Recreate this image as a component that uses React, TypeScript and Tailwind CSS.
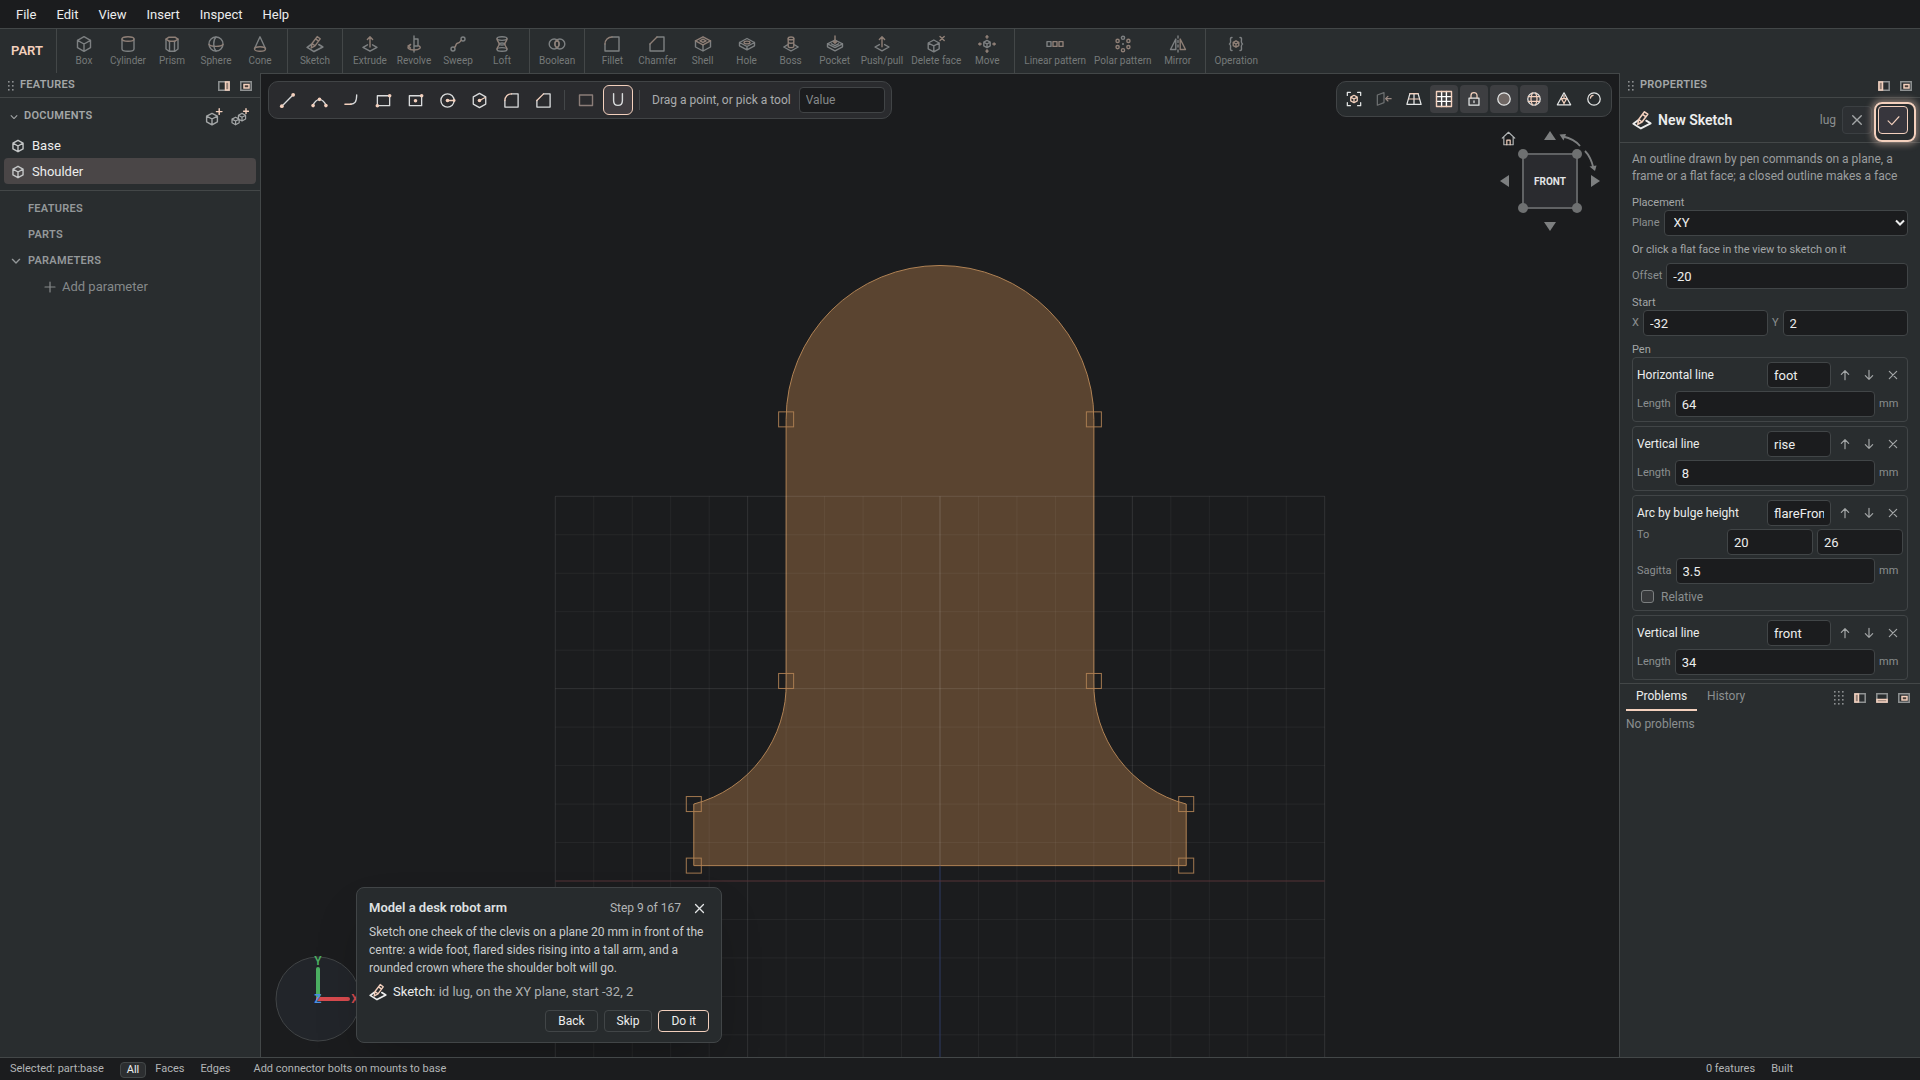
import React, { useState } from "react";
import clsx from "clsx";

const ACCENT = "#f3d0bd";

interface IconProps {
  size?: number;
  className?: string;
}

interface GlyphProps extends IconProps {
  children: React.ReactNode;
}

// every icon is drawn on an 18 unit grid
const Glyph = ({ size = 18, className, children }: GlyphProps) => (
  <svg
    width={size}
    height={size}
    viewBox="0 0 18 18"
    fill="none"
    stroke="currentColor"
    strokeWidth={size < 15 ? 1.8 : 1.4}
    strokeLinejoin="round"
    strokeLinecap="round"
    className={clsx("shrink-0", className)}
    aria-hidden="true"
  >
    {children}
  </svg>
);

const cube = "M9 1.7L15.5 5.3V12.7L9 16.3L2.5 12.7V5.3ZM2.5 5.3L9 9L15.5 5.3M9 9V16.3";

const icons: Record<string, React.ReactNode> = {
  box: <path d={cube} />,
  cylinder: (
    <>
      <path d="M3 4V14C3 15.2 5.7 16.2 9 16.2S15 15.2 15 14V4" />
      <ellipse cx="9" cy="4" rx="6" ry="2.2" stroke={ACCENT} />
    </>
  ),
  prism: (
    <>
      <path d="M3 4.2V14L6 16.2H12L15 14V4.2M6.5 6.2V16M11.5 6.2V16" />
      <path d="M3 4.2L6 2.2H12L15 4.2L12 6.2H6Z" stroke={ACCENT} />
    </>
  ),
  sphere: (
    <>
      <circle cx="9" cy="9" r="7" />
      <path d="M2 9.5C4 12 14 12 16 9.5" stroke={ACCENT} />
      <path d="M9 2C6 5 6 13 9 16" />
    </>
  ),
  cone: (
    <>
      <path d="M3.5 13.8L9 1.8L14.5 13.8" />
      <ellipse cx="9" cy="14" rx="5.5" ry="2.2" stroke={ACCENT} />
    </>
  ),
  sketch: (
    <>
      <path d="M5.5 9.3L1.2 12.4L8 16.6L16.8 12L12.8 9.6" strokeWidth="1.7" />
      <path d="M5.2 13L6 8.5L11.2 1.6L14.2 3.8L9 10.8ZM9.6 3.9L12.6 6.1M6 8.5L9 10.8" stroke={ACCENT} />
    </>
  ),
  extrude: (
    <>
      <path d="M6.5 9.8L2 12.3L9 16.2L16 12.3L11.5 9.8" />
      <path d="M9 12V1.8M6.4 4.4L9 1.8L11.6 4.4" stroke={ACCENT} />
    </>
  ),
  revolve: (
    <>
      <path d="M9 1V17M9 4H13V11H9" />
      <path d="M5 10.5C1 12.5 3.5 15 9 15S17 12.5 13.8 10.8M5.5 13L3 11L5.6 9.4" stroke={ACCENT} />
    </>
  ),
  sweep: (
    <>
      <circle cx="4" cy="14" r="2" />
      <circle cx="14" cy="4" r="2" />
      <path d="M5.5 12.4C8 10 6 8.5 9 8S10.5 6 12.4 5.4" stroke={ACCENT} />
    </>
  ),
  loft: (
    <>
      <ellipse cx="9" cy="3.6" rx="5" ry="1.8" />
      <ellipse cx="9" cy="14.4" rx="5" ry="1.8" />
      <ellipse cx="9" cy="9" rx="2.8" ry="1" />
      <path d="M4 4C4.5 7 6.2 7 6.2 9S4.5 11.5 4 14M14 4C13.5 7 11.8 7 11.8 9S13.5 11.5 14 14" stroke={ACCENT} />
    </>
  ),
  boolean: (
    <>
      <circle cx="6.2" cy="9" r="5" />
      <circle cx="11.8" cy="9" r="5" />
      <path d="M9 4.9C11.8 7.4 11.8 10.6 9 13.1C6.2 10.6 6.2 7.4 9 4.9Z" stroke={ACCENT} />
    </>
  ),
  fillet: (
    <>
      <path d="M9 2H16V16H2V9" />
      <path d="M2 9C2 5 5 2 9 2" stroke={ACCENT} />
    </>
  ),
  chamfer: (
    <>
      <path d="M9 2H16V16H2V9" />
      <path d="M2 9L9 2" stroke={ACCENT} />
    </>
  ),
  shell: (
    <>
      <path d="M1.5 5.8V12L9 16L16.5 12V5.8M9 9.8V16" />
      <path d="M9 1.8L16.5 5.8L9 9.8L1.5 5.8ZM9 4.2L12 5.8L9 7.4L6 5.8Z" stroke={ACCENT} />
    </>
  ),
  hole: (
    <>
      <path d="M9 3.5L16.5 7.5L9 11.5L1.5 7.5ZM1.5 7.5V10.8L9 14.8L16.5 10.8V7.5M9 11.5V14.8" />
      <ellipse cx="9" cy="7.5" rx="3" ry="1.4" stroke={ACCENT} />
    </>
  ),
  boss: (
    <>
      <path d="M5.5 9.8L1.8 12L9 16L16.2 12L12.5 9.8" />
      <path d="M6.2 3.6V11.5C6.2 13 11.8 13 11.8 11.5V3.6M6.2 7.4C7.5 8.6 10.5 8.6 11.8 7.4" stroke={ACCENT} />
      <ellipse cx="9" cy="3.4" rx="2.8" ry="1.4" stroke={ACCENT} />
    </>
  ),
  pocket: (
    <>
      <path d="M9 5L16.5 8.8L9 12.6L1.5 8.8ZM1.5 8.8V11.8L9 15.8L16.5 11.8V8.8M5.5 8.8L9 10.6L12.5 8.8" />
      <path d="M9 1V8M7.2 6.4L9 8.2L10.8 6.4" stroke={ACCENT} />
    </>
  ),
  pushpull: (
    <>
      <path d="M6.4 9.6L2 12L9 15.8L16 12L11.6 9.6" />
      <path d="M9 11.8V1.8M6.4 4.4L9 1.8L11.6 4.4" stroke={ACCENT} />
    </>
  ),
  deleteface: (
    <>
      <path d="M6.8 5L12.2 8V13.8L6.8 16.8L1.2 13.8V8ZM1.2 8L6.8 10.9L12.2 8M6.8 10.9V16.8" />
      <path d="M13 1.4L17.2 5.6M17.2 1.4L13 5.6" stroke={ACCENT} />
    </>
  ),
  move: (
    <>
      <path d="M9 5.4L12.2 7.2V10.8L9 12.6L5.8 10.8V7.2ZM5.8 7.2L9 9L12.2 7.2M9 9V12.6" />
      <path
        d="M9 3.2V.8M9 14.8V17.2M3.2 9H.8M14.8 9H17.2M8 1.9L9 .7L10 1.9M8 16.1L9 17.3L10 16.1M1.9 8L.7 9L1.9 10M16.1 8L17.3 9L16.1 10"
        stroke={ACCENT}
      />
    </>
  ),
  linear: (
    <>
      <path d="M1 6.6H5V11.4H1Z" />
      <path d="M7 6.6H11V11.4H7ZM13 6.6H17V11.4H13Z" stroke={ACCENT} />
    </>
  ),
  polar: (
    <>
      <circle cx="9" cy="2.8" r="1.6" />
      <circle cx="14.4" cy="5.9" r="1.6" stroke={ACCENT} />
      <circle cx="14.4" cy="12.1" r="1.6" stroke={ACCENT} />
      <circle cx="9" cy="15.2" r="1.6" stroke={ACCENT} />
      <circle cx="3.6" cy="12.1" r="1.6" stroke={ACCENT} />
      <circle cx="3.6" cy="5.9" r="1.6" stroke={ACCENT} />
      <path d="M9 8.9V9.1" strokeWidth="2" />
    </>
  ),
  mirror: (
    <>
      <path d="M9 1V3M9 5.5V7.5M9 10V12M9 15V17" />
      <path d="M6.8 4V14.5H1.5Z" />
      <path d="M11.2 4V14.5H16.5Z" stroke={ACCENT} />
    </>
  ),
  operation: (
    <>
      <path d="M5 2.5C2.6 2.5 3.8 5 3.6 7C3.5 8.4 2.4 9 2.4 9S3.5 9.6 3.6 11C3.8 13 2.6 15.5 5 15.5M13 2.5C15.4 2.5 14.2 5 14.4 7C14.5 8.4 15.6 9 15.6 9S14.5 9.6 14.4 11C14.2 13 15.4 15.5 13 15.5" />
      <path d="M9 5.8L11.8 7.4V10.6L9 12.2L6.2 10.6V7.4ZM6.2 7.4L9 9L11.8 7.4M9 9V12" stroke={ACCENT} />
    </>
  ),
  line: (
    <>
      <path d="M3 15L15 3" />
      <g fill={ACCENT} stroke="none">
        <circle cx="3" cy="15" r="2" />
        <circle cx="15" cy="3" r="2" />
      </g>
    </>
  ),
  arc: (
    <>
      <path d="M2 14.5C3.5 10.5 6 8 9 8S14.5 10.5 16 14.5" />
      <g fill={ACCENT} stroke="none">
        <circle cx="2.2" cy="14.4" r="1.9" />
        <circle cx="9" cy="7.8" r="1.9" />
        <circle cx="15.8" cy="14.4" r="1.9" />
      </g>
    </>
  ),
  tangent: (
    <>
      <path d="M8 13C12.5 13 14.5 10.5 14.5 3" />
      <path d="M2 13H8.5" stroke={ACCENT} />
    </>
  ),
  rect: (
    <>
      <path d="M2.5 4H15.5V14.5H2.5Z" />
      <g fill={ACCENT} stroke="none">
        <circle cx="2.5" cy="14.5" r="1.9" />
        <circle cx="15.5" cy="4" r="1.9" />
      </g>
    </>
  ),
  centerRect: (
    <>
      <path d="M2.5 4H15.5V14.5H2.5Z" />
      <g fill={ACCENT} stroke="none">
        <circle cx="9" cy="9.2" r="1.9" />
        <circle cx="15.5" cy="4" r="1.9" />
      </g>
    </>
  ),
  circle: (
    <>
      <circle cx="9" cy="9" r="7" />
      <path d="M9 9H16" stroke={ACCENT} />
      <circle cx="9" cy="9" r="1.9" fill={ACCENT} stroke="none" />
      <circle cx="16" cy="9" r="1.5" fill={ACCENT} stroke="none" />
    </>
  ),
  polygon: (
    <>
      <path d="M9 1.5L15.6 5.2V12.8L9 16.5L2.4 12.8V5.2Z" />
      <path d="M9 9L15 5.8" stroke={ACCENT} />
      <circle cx="9" cy="9" r="1.9" fill={ACCENT} stroke="none" />
    </>
  ),
  construction: <path d="M2.5 4H15.5V14.5H2.5Z" stroke="#8b7d78" />,
  snap: <path d="M4.6 2.6V9.5C4.6 12.6 6.4 14.4 9 14.4S13.4 12.6 13.4 9.5V2.6" />,
  focus: (
    <>
      <path d="M1.5 5V1.5H5M13 1.5H16.5V5M16.5 13V16.5H13M5 16.5H1.5V13" />
      <path d="M9 4.8L12.7 6.9V11.1L9 13.2L5.3 11.1V6.9ZM5.3 6.9L9 9L12.7 6.9M9 9V13.2" stroke={ACCENT} />
    </>
  ),
  section: (
    <>
      <path d="M1.5 4.5L9 1.8V13L1.5 16Z" />
      <path d="M17 8.6H11M13.4 6L10.8 8.6L13.4 11.2" stroke="#9a8a83" />
    </>
  ),
  perspective: (
    <>
      <path d="M4.4 3H13.6L17 15H1ZM9 3V15" />
      <path d="M3 9H15M4.4 3H13.6" stroke={ACCENT} />
    </>
  ),
  grid: (
    <>
      <path d="M6.6 1.5V16.5M11.4 1.5V16.5M1.5 6.6H16.5M1.5 11.4H16.5" stroke="#ffffff" />
      <path d="M1.5 1.5H16.5V16.5H1.5Z" stroke={ACCENT} />
    </>
  ),
  lock: (
    <>
      <path d="M3.4 8H14.6V16H3.4Z" />
      <path d="M5.6 8V5C5.6 .8 12.4 .8 12.4 5V8" stroke={ACCENT} />
      <path d="M9 11V13" />
    </>
  ),
  shaded: <circle cx="9" cy="9" r="7" fill="#6f6764" />,
  mesh: (
    <>
      <circle cx="9" cy="9" r="7" />
      <path d="M7.2 2.2C5.4 6 5.4 12 7.2 15.8M10.8 2.2C12.6 6 12.6 12 10.8 15.8M2.6 6.4H15.4M2.6 11.6H15.4" stroke={ACCENT} />
    </>
  ),
  triangle: (
    <>
      <path d="M9 2L16.5 15.5H1.5Z" />
      <path d="M6 8.6H12L9 13.8ZM9 8V5M9 13.5V15" stroke={ACCENT} />
    </>
  ),
  material: (
    <>
      <circle cx="9" cy="9" r="7" />
      <path d="M5 8C5.2 6.2 6.4 5.2 8 5" stroke={ACCENT} />
    </>
  ),
  addDoc: (
    <>
      <path d="M7 5.4L12.4 8.2V13.8L7 16.8L1.6 13.8V8.2ZM1.6 8.2L7 11L12.4 8.2M7 11V16.8" />
      <path d="M14.2 .8V6.4M11.4 3.6H17" stroke={ACCENT} />
    </>
  ),
  addLinked: (
    <>
      <path
        d="M4.6 9.2L8.2 11.1V14.8L4.6 16.8L1 14.8V11.1ZM1 11.1L4.6 13L8.2 11.1M4.6 13V16.8M11 5.4L14.6 7.3V11L11 13L7.4 11V7.3ZM7.4 7.3L11 9.2L14.6 7.3M11 9.2V13"
        strokeWidth="1.2"
      />
      <path d="M15 .8V5.6M12.6 3.2H17.4" stroke={ACCENT} />
    </>
  ),
  chevron: <path d="M2.5 6L9 12.5L15.5 6" strokeWidth="2.4" />,
  close: <path d="M3.5 3.5L14.5 14.5M14.5 3.5L3.5 14.5" />,
  check: <path d="M2.5 9.5L7 14L15.5 4.5" stroke={ACCENT} />,
  up: <path d="M9 16V2.5M3.5 8L9 2.5L14.5 8" />,
  down: <path d="M9 2V15.5M3.5 10L9 15.5L14.5 10" />,
  plus: <path d="M9 1.5V16.5M1.5 9H16.5" />,
  home: (
    <>
      <path d="M1.5 8.6L9 1.5L16.5 8.6M3.4 7V16.5H14.6V7" />
      <path d="M7 16.5V11H11V16.5" stroke={ACCENT} />
    </>
  ),
};

const Icon = ({ name, size, className }: IconProps & { name: string }) => (
  <Glyph size={size} className={className}>
    {icons[name]}
  </Glyph>
);

type Dock = "left" | "right" | "bottom" | "float";

const dockBars: Record<Dock, React.ReactNode> = {
  left: <path d="M1 1H4.5V9H1Z" stroke={ACCENT} fill="#8f7d74" />,
  right: <path d="M7.5 1H11V9H7.5Z" stroke={ACCENT} fill="#8f7d74" />,
  bottom: <path d="M1 6.5H11V9H1Z" stroke={ACCENT} fill="#8f7d74" />,
  float: <path d="M4 3.5H9V7H4Z" stroke={ACCENT} fill="#4a3f3a" />,
};

const DockButton = ({ dock }: { dock: Dock }) => (
  <button aria-label={`Dock ${dock}`}>
    <svg width="12" height="10" viewBox="0 0 12 10" fill="none" stroke="#8f9293" strokeWidth="1.5">
      <path d="M.8 .8H11.2V9.2H.8Z" />
      {dockBars[dock]}
    </svg>
  </button>
);

const Grip = ({ cols = 2, rows = 3 }: { cols?: number; rows?: number }) => (
  <svg width={cols * 4 - 2} height={rows * 4 - 2} fill="#8b8f90" aria-hidden="true">
    {Array.from({ length: cols * rows }, (_, i) => (
      <rect key={i} x={(i % cols) * 4} y={Math.floor(i / cols) * 4} width="1.6" height="1.6" />
    ))}
  </svg>
);

const menus = ["File", "Edit", "View", "Insert", "Inspect", "Help"];

const toolGroups: [string, string][][] = [
  [["box", "Box"], ["cylinder", "Cylinder"], ["prism", "Prism"], ["sphere", "Sphere"], ["cone", "Cone"]],
  [["sketch", "Sketch"]],
  [["extrude", "Extrude"], ["revolve", "Revolve"], ["sweep", "Sweep"], ["loft", "Loft"]],
  [["boolean", "Boolean"]],
  [
    ["fillet", "Fillet"],
    ["chamfer", "Chamfer"],
    ["shell", "Shell"],
    ["hole", "Hole"],
    ["boss", "Boss"],
    ["pocket", "Pocket"],
    ["pushpull", "Push/pull"],
    ["deleteface", "Delete face"],
    ["move", "Move"],
  ],
  [["linear", "Linear pattern"], ["polar", "Polar pattern"], ["mirror", "Mirror"]],
  [["operation", "Operation"]],
];

const MenuBar = () => (
  <nav className="flex h-[29px] shrink-0 items-center gap-1 border-b border-[#434748] px-2 pt-px text-[13px] text-[#eceded]">
    {menus.map((menu) => (
      <button key={menu} className="px-2">
        {menu}
      </button>
    ))}
  </nav>
);

const Toolbar = () => (
  <div className="flex h-11 shrink-0 bg-[#292d2f]">
    <div className="flex w-14 items-center justify-center pr-0.5 text-[13px] font-semibold text-[#f3d0bd]">PART</div>
    {toolGroups.map((group) => (
      <div key={group[0][0]} className="flex border-l border-[#434748] px-[5px]">
        {group.map(([icon, label]) => (
          <button
            key={icon}
            disabled
            className="flex min-w-[44px] flex-col items-center gap-[2px] px-1 pt-[6px] text-[10px] leading-3 text-[#757979]"
          >
            <Icon name={icon} className="text-[#d0d3d4] opacity-50" />
            <span>{label}</span>
          </button>
        ))}
      </div>
    ))}
  </div>
);

interface PanelHeaderProps {
  title: string;
  docks: Dock[];
}

const PanelHeader = ({ title, docks }: PanelHeaderProps) => (
  <div className="flex h-[25px] shrink-0 items-center gap-[10px] border-b border-[#434748] px-2 pt-px">
    <div className="flex flex-1 items-center gap-1.5">
      <Grip />
      <h2 className="text-[11px] font-semibold tracking-wide text-[#a3a6a7]">{title}</h2>
    </div>
    {docks.map((dock) => (
      <DockButton key={dock} dock={dock} />
    ))}
  </div>
);

const TreeHeading = ({ label, open }: { label: string; open?: boolean }) => (
  <button className="flex h-[26px] w-full items-center gap-[7px] px-[11px] text-[11px] font-semibold tracking-wide text-[#94989a]">
    <span className="w-[10px]">{open && <Icon name="chevron" size={10} />}</span>
    {label}
  </button>
);

const FeaturesPanel = () => {
  const [selected, setSelected] = useState("Shoulder");

  return (
    <aside className="flex w-[260px] shrink-0 flex-col bg-[#292d2f]">
      <PanelHeader title="FEATURES" docks={["right", "float"]} />
      <div className="border-b border-[#434748] pb-1.5">
        <div className="flex h-[34px] items-center pt-[3px] pr-[11px] pl-[10px] text-[#a3a6a7]">
          <Icon name="chevron" size={8} />
          <h3 className="ml-1.5 flex-1 text-[11px] font-semibold tracking-wide">DOCUMENTS</h3>
          <button aria-label="New document" className="mr-2">
            <Icon name="addDoc" />
          </button>
          <button aria-label="New linked document">
            <Icon name="addLinked" />
          </button>
        </div>
        {["Base", "Shoulder"].map((doc) => (
          <button
            key={doc}
            onClick={() => setSelected(doc)}
            className={clsx(
              "mx-1 flex h-[26px] w-[252px] items-center gap-[7px] rounded px-[7px] pt-px text-[13px] text-[#eceded]",
              selected === doc && "bg-[#4a4647]"
            )}
          >
            <Icon name="box" size={14} className="text-[#c4c6c7]" />
            {doc}
          </button>
        ))}
      </div>
      <div className="pt-[5px]">
        <TreeHeading label="FEATURES" />
        <TreeHeading label="PARTS" />
        <TreeHeading label="PARAMETERS" open />
        <button className="flex h-[26px] items-center gap-1.5 pl-11 text-[13px] text-[#85898a]">
          <Icon name="plus" size={12} />
          Add parameter
        </button>
      </div>
    </aside>
  );
};

// origin of the sketch plane and pixels per millimetre in the scene
const OX = 679;
const OY = 807;
const MM = 7.694;
const px = (x: number) => OX + x * MM;
const py = (y: number) => OY - y * MM;

const outline = [
  `M${px(-32)} ${py(2)}`,
  `H${px(32)}`,
  `V${py(10)}`,
  `A${16.04 * MM} ${16.04 * MM} 0 0 1 ${px(20)} ${py(26)}`,
  `V${py(60)}`,
  `A${20 * MM} ${20 * MM} 0 0 0 ${px(-20)} ${py(60)}`,
  `V${py(26)}`,
  `A${16.04 * MM} ${16.04 * MM} 0 0 1 ${px(-32)} ${py(10)}`,
  "Z",
].join(" ");

const handles = [
  [-32, 2],
  [32, 2],
  [32, 10],
  [20, 26],
  [20, 60],
  [-20, 60],
  [-20, 26],
  [-32, 10],
];

const gridSteps = Array.from({ length: 21 }, (_, i) => (i - 10) * 5);

const Scene = () => (
  <svg className="absolute inset-0 h-full w-full" viewBox="0 0 1358 983" preserveAspectRatio="xMidYMid slice" fill="none">
    <path d={outline} fill="#5a4430" stroke="#b08254" />
    <g stroke="#ffffff">
      {gridSteps.map((s) => (
        <g key={s} strokeOpacity={s % 25 === 0 ? 0.1 : 0.05}>
          {s !== 0 && <path d={`M${px(s)} ${py(50)}V983`} />}
          {s !== 0 && <path d={`M${px(-50)} ${py(s)}H${px(50)}`} />}
        </g>
      ))}
      <path d={`M${px(0)} ${py(50)}V${py(2)}`} strokeOpacity="0.16" />
    </g>
    <path d={`M${px(0)} ${py(2)}V983`} stroke="#2e3a62" />
    <path d={`M${px(-50)} ${py(0)}H${px(50)}`} stroke="#573237" />
    {handles.map(([x, y]) => (
      <rect key={`${x},${y}`} x={px(x) - 7.5} y={py(y) - 7.5} width="15" height="15" stroke="#b08254" strokeOpacity="0.9" />
    ))}
  </svg>
);

const sketchTools = ["line", "arc", "tangent", "rect", "centerRect", "circle", "polygon", "fillet", "chamfer"];

const SketchToolbar = () => (
  <div className="flex h-[38px] items-center gap-[2px] rounded-[10px] border border-[#414446] bg-[#2a2b2e] pr-1.5 pl-[3px] text-[#d9dbdc]">
    {sketchTools.map((tool) => (
      <button key={tool} aria-label={tool} className="grid size-[30px] place-items-center rounded-md">
        <Icon name={tool} size={17} />
      </button>
    ))}
    <span className="mx-1 h-5 w-px bg-[#434648]" />
    <button aria-label="Construction" disabled className="grid size-[30px] place-items-center">
      <Icon name="construction" />
    </button>
    <button aria-label="Snap" className="grid size-[30px] place-items-center rounded-md border border-[#f3d0bd] bg-[#403c40]">
      <Icon name="snap" />
    </button>
    <span className="mx-1 h-5 w-px bg-[#434648]" />
    <label htmlFor="tool-value" className="px-1.5 text-[12px] text-[#a9acad]">
      Drag a point, or pick a tool
    </label>
    <input
      id="tool-value"
      placeholder="Value"
      className="h-[26px] w-[86px] rounded border border-[#414446] bg-[#1b1c1e] px-1.5 text-[12px] placeholder:text-[#85898a]"
    />
  </div>
);

const viewTools: [string, boolean][] = [
  ["focus", false],
  ["section", false],
  ["perspective", false],
  ["grid", true],
  ["lock", true],
  ["shaded", true],
  ["mesh", true],
  ["triangle", false],
  ["material", false],
];

const ViewToolbar = () => (
  <div className="flex h-9 items-center gap-[2px] rounded-[10px] border border-[#414446] bg-[#282c2e] px-[3px] text-[#e4e6e6]">
    {viewTools.map(([tool, active]) => (
      <button
        key={tool}
        aria-label={tool}
        className={clsx(
          "grid size-7 place-items-center rounded",
          active && "bg-[#3d3e41]",
          tool === "section" && "text-[#6d7071]"
        )}
      >
        <Icon name={tool} size={tool === "grid" ? 18 : 16} />
      </button>
    ))}
  </div>
);

const ViewCube = () => (
  <svg width="104" height="104" viewBox="0 0 104 104" className="absolute top-[54px] right-[18px]">
    <rect x="26" y="26" width="54" height="54" fill="#2a2b2f" stroke="#606264" strokeWidth="2" />
    <g fill="#6e7071">
      <circle cx="26" cy="26" r="5" />
      <circle cx="80" cy="26" r="5" />
      <circle cx="26" cy="80" r="5" />
      <circle cx="80" cy="80" r="5" />
    </g>
    <g fill="#7d7f80">
      <path d="M53 3L59 12H47Z" />
      <path d="M53 103L59 94H47Z" />
      <path d="M3 53L12 47V59Z" />
      <path d="M103 53L94 47V59Z" />
      <path d="M62.5 6.5L69 6L66.5 12.5Z" />
      <path d="M98 43L92.5 38.5L99.5 37.5Z" />
    </g>
    <path d="M66 8.5C73 10 79 13 83 18M88 23C93 28 95 34 96.5 40" fill="none" stroke="#7d7f80" strokeWidth="1.8" />
    <text x="53" y="56.5" textAnchor="middle" fontSize="10" fontWeight="700" fill="#e3e5e6">
      FRONT
    </text>
  </svg>
);

const AxisGizmo = () => (
  <svg width="92" height="92" viewBox="0 0 92 92" className="absolute bottom-3 left-[11px]">
    <circle cx="46" cy="46" r="42" fill="#22252a" stroke="#414446" />
    <path d="M46 46V16" stroke="#4caf62" strokeWidth="4" strokeLinecap="round" />
    <path d="M46 46H76" stroke="#d94b4f" strokeWidth="4" strokeLinecap="round" />
    <g fontSize="12" fontWeight="600" textAnchor="middle">
      <text x="46" y="12" fill="#4caf62">Y</text>
      <text x="83" y="50" fill="#d94b4f">X</text>
      <text x="46" y="50" fill="#4a90e2">Z</text>
    </g>
  </svg>
);

const TourCard = () => (
  <section className="absolute bottom-[14px] left-[95px] w-[366px] rounded-lg border border-[#414547] bg-[#272b2d] px-3 pt-[9px] pb-[10px] text-[12px] shadow-2xl">
    <div className="flex h-[22px] items-center">
      <h2 className="flex-1 text-[13px] font-semibold text-[#dfe1e2]">Model a desk robot arm</h2>
      <span className="text-[#b2b5b6]">Step 9 of 167</span>
      <button aria-label="Close" className="mr-[3px] ml-3 text-[#e3e5e6]">
        <Icon name="close" size={13} />
      </button>
    </div>
    <p className="mt-1 leading-[18px] text-[#c9cbcc]">
      Sketch one cheek of the clevis on a plane 20 mm in front of the centre: a wide foot, flared sides rising into a tall
      arm, and a rounded crown where the shoulder bolt will go.
    </p>
    <div className="mt-[3px] flex h-6 items-center gap-1.5 text-[13px] text-[#aeb1b2]">
      <Icon name="sketch" size={18} className="text-[#eceded]" />
      <p>
        <span className="text-[#eceded]">Sketch</span>: id lug, on the XY plane, start -32, 2
      </p>
    </div>
    <div className="mt-1.5 flex justify-end gap-1.5 text-[#eceded]">
      <button className="h-[22px] rounded border border-[#414547] px-3">Back</button>
      <button className="h-[22px] rounded border border-[#414547] px-3">Skip</button>
      <button className="h-[22px] rounded border border-[#f3d0bd] px-3">Do it</button>
    </div>
  </section>
);

const Viewport = () => (
  <main className="relative min-w-0 flex-1 overflow-hidden border border-b-0 border-[#434748]">
    <Scene />
    <div className="relative flex items-start justify-between p-[7px]">
      <SketchToolbar />
      <ViewToolbar />
    </div>
    <button aria-label="Home view" className="absolute top-[57px] right-[103px] text-[#b2b5b6]">
      <Icon name="home" size={15} />
    </button>
    <ViewCube />
    <AxisGizmo />
    <TourCard />
  </main>
);

interface FieldProps {
  id: string;
  label?: string;
  value: string;
  unit?: string;
}

const inputClass = "h-[26px] min-w-0 rounded border border-[#414547] bg-[#1b1c1e] px-1.5 text-[13px] text-[#eceded]";

const Field = ({ id, label, value, unit }: FieldProps) => (
  <div className="flex items-center gap-1">
    <label htmlFor={id} className="text-[11px] text-[#8b8f90]">
      {label}
    </label>
    <input id={id} defaultValue={value} className={clsx(inputClass, "flex-1")} />
    {unit && <span className="w-6 text-[11px] text-[#8b8f90]">{unit}</span>}
  </div>
);

interface Command {
  kind: string;
  name: string;
  label: string;
  value: string;
  to?: [string, string];
}

const commands: Command[] = [
  { kind: "Horizontal line", name: "foot", label: "Length", value: "64" },
  { kind: "Vertical line", name: "rise", label: "Length", value: "8" },
  { kind: "Arc by bulge height", name: "flareFront", label: "Sagitta", value: "3.5", to: ["20", "26"] },
  { kind: "Vertical line", name: "front", label: "Length", value: "34" },
];

const CommandCard = ({ kind, name, label, value, to }: Command) => (
  <li className="space-y-[3px] rounded border border-[#414547] p-1">
    <div className="flex items-center gap-1 text-[#a3a6a7]">
      <label htmlFor={`${name}-name`} className="flex-1 text-[12px] text-[#eceded]">
        {kind}
      </label>
      <input id={`${name}-name`} defaultValue={name} className={clsx(inputClass, "w-16")} />
      {["up", "down", "close"].map((action) => (
        <button key={action} aria-label={`${action} ${name}`} className="grid size-5 place-items-center">
          <Icon name={action} size={12} />
        </button>
      ))}
    </div>
    {to && (
      <div className="flex gap-1">
        <label htmlFor={`${name}-x`} className="flex-1 text-[11px] leading-3 text-[#8b8f90]">
          To
        </label>
        <input id={`${name}-x`} defaultValue={to[0]} className={clsx(inputClass, "w-[86px]")} />
        <input aria-label="To Y" defaultValue={to[1]} className={clsx(inputClass, "w-[86px]")} />
      </div>
    )}
    <Field id={`${name}-value`} label={label} value={value} unit="mm" />
    {to && (
      <label className="flex h-[19px] items-center gap-[7px] pl-1 text-[12px] text-[#8b8f90]">
        <input type="checkbox" className="size-[13px] appearance-none rounded-[3px] border border-[#7c7f80] bg-[#383a3c]" />
        Relative
      </label>
    )}
  </li>
);

const PropertiesPanel = () => (
  <aside className="flex w-[300px] shrink-0 flex-col bg-[#292d2f]">
    <PanelHeader title="PROPERTIES" docks={["left", "float"]} />
    <div className="flex h-[45px] shrink-0 items-center border-b border-[#434748] px-3">
      <Icon name="sketch" size={20} className="text-[#eceded]" />
      <h2 className="ml-1.5 flex-1 text-[14px] font-semibold text-[#eceded]">New Sketch</h2>
      <span className="mr-1.5 text-[12px] text-[#8b8f90]">lug</span>
      <button
        aria-label="Cancel"
        className="mr-1.5 grid h-7 w-[30px] place-items-center rounded border border-[#3b3f42] bg-[#2d3033] text-[#a3a6a7]"
      >
        <Icon name="close" size={14} />
      </button>
      <button
        aria-label="Accept"
        className="relative grid h-7 w-[30px] place-items-center rounded border border-[#f3d0bd] bg-[#37363d]"
      >
        <Icon name="check" size={15} />
        <span className="absolute -top-[5px] -right-[9px] -bottom-[9px] -left-[5px] rounded-lg border-2 border-[#f3d0bd] shadow-[0_0_6px_3px_rgba(243,208,189,0.4)]" />
      </button>
    </div>
    <div className="space-y-[7px] px-3 pt-2 pb-[3px] text-[11px] leading-[14px] text-[#a3a6a7]">
      <p className="mb-[11px] text-[12px] leading-[17px] text-[#9b9e9f]">
        An outline drawn by pen commands on a plane, a frame or a flat face; a closed outline makes a face
      </p>
      <div>
        <h3>Placement</h3>
        <div className="flex items-center gap-1">
          <label htmlFor="plane" className="text-[#8b8f90]">
            Plane
          </label>
          <div className="relative flex-1">
            <select id="plane" className={clsx(inputClass, "block w-full appearance-none pl-[9px]")}>
              <option>XY</option>
              <option>XZ</option>
              <option>YZ</option>
            </select>
            <svg
              width="10"
              height="8"
              viewBox="0 0 10 8"
              fill="none"
              stroke="#eceded"
              strokeWidth="2"
              className="pointer-events-none absolute top-[9px] right-[3px]"
            >
              <path d="M1 1.5L5 5.5L9 1.5" />
            </svg>
          </div>
        </div>
      </div>
      <p className="leading-[13px]">Or click a flat face in the view to sketch on it</p>
      <Field id="offset" label="Offset" value="-20" />
      <div>
        <h3>Start</h3>
        <div className="grid grid-cols-2 gap-1">
          <Field id="start-x" label="X" value="-32" />
          <Field id="start-y" label="Y" value="2" />
        </div>
      </div>
      <div>
        <h3>Pen</h3>
        <ul className="space-y-1">
          {commands.map((command) => (
            <CommandCard key={command.name} {...command} />
          ))}
        </ul>
      </div>
    </div>
    <div className="flex-1 border-t border-[#434748] px-1.5 text-[12px] text-[#8b8f90]">
      <div className="flex h-[27px] items-stretch">
        <button className="border-b-2 border-[#f3d0bd] px-[10px] pb-[2px] text-[#eceded]">Problems</button>
        <button className="flex-1 px-[10px] pb-1 text-left">History</button>
        <div className="flex items-center gap-[10px] pr-1">
          <Grip cols={3} rows={4} />
          <DockButton dock="left" />
          <DockButton dock="bottom" />
          <DockButton dock="float" />
        </div>
      </div>
      <p className="mt-1">No problems</p>
    </div>
  </aside>
);

const StatusBar = () => (
  <footer className="flex h-[23px] shrink-0 items-center border-t border-[#434748] px-[10px] pt-px text-[11px] text-[#b2b5b6]">
    <span className="mr-4">Selected: part:base</span>
    <button className="rounded border border-[#434748] bg-[#2c2e30] px-1.5 leading-[14px] text-[#eceded]">All</button>
    <button className="ml-[3px] px-1.5">Faces</button>
    <button className="ml-1 px-1.5">Edges</button>
    <span className="ml-[17px] flex-1">Add connector bolts on mounts to base</span>
    <span className="mr-4">0 features</span>
    <span className="mr-[117px]">Built</span>
  </footer>
);

const App = () => (
  <div className="flex h-screen flex-col overflow-hidden bg-[#1b1c1e] font-['Roboto',sans-serif]">
    <MenuBar />
    <Toolbar />
    <div className="flex min-h-0 flex-1">
      <FeaturesPanel />
      <Viewport />
      <PropertiesPanel />
    </div>
    <StatusBar />
  </div>
);

export default App;
